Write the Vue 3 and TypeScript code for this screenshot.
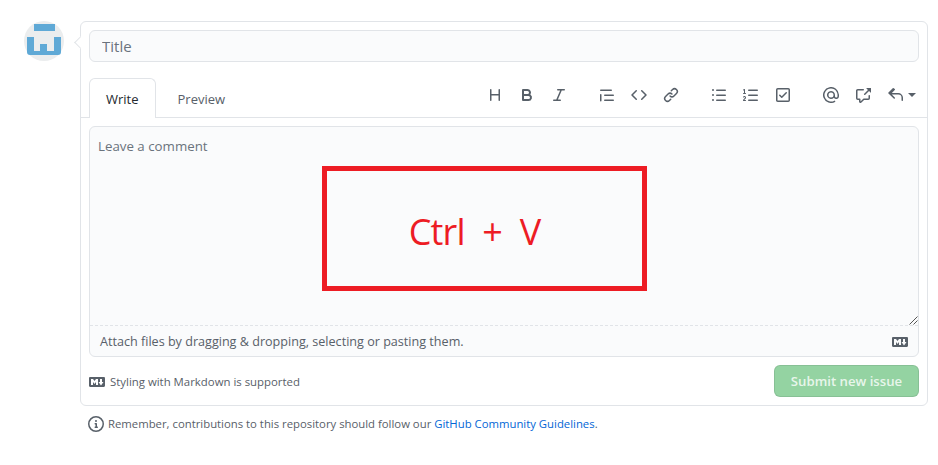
<template>
  <div class="page">
    <div class="thread">
      <svg class="avatar" viewBox="0 0 40 40" aria-hidden="true">
        <circle cx="20" cy="20" r="20" fill="#ebedee" />
        <rect x="10" y="3" width="21" height="7" fill="#5fa9d6" />
        <path d="M3 16h7v14h6v-7h7v7h7V16h7v15a3 3 0 01-3 3H6a3 3 0 01-3-3z" fill="#5fa9d6" />
      </svg>
      <div class="card">
        <input class="title" placeholder="Title" />
        <div class="tabbar">
          <div class="tabs">
            <span class="tab active">Write</span>
            <span class="tab">Preview</span>
          </div>
          <div class="toolbar">
            <div v-for="(group, i) in toolbar" :key="i" class="group">
              <svg v-for="d in group" :key="d" class="icon" viewBox="0 0 16 16"><path :d="d" /></svg>
            </div>
            <div class="reply">
              <svg class="icon" viewBox="0 0 16 16"><path :d="replyIcon" /></svg>
              <span class="caret"></span>
            </div>
          </div>
        </div>
        <div class="body">
          <div class="field">
            <div class="area">
              <span class="placeholder">Leave a comment</span>
              <div class="paste-box">Ctrl + V</div>
              <svg class="grip" viewBox="0 0 10 10"><path d="M9.5 1.5l-8 8M9.5 5.5l-4 4" /></svg>
            </div>
            <div class="attach">
              <span>Attach files by dragging &amp; dropping, selecting or pasting them.</span>
              <svg class="md" viewBox="0 0 16 16"><path :d="markdownIcon" /></svg>
            </div>
          </div>
          <div class="actions">
            <span class="hint">
              <svg class="md" viewBox="0 0 16 16"><path :d="markdownIcon" /></svg>
              Styling with Markdown is supported
            </span>
            <button class="submit" disabled>Submit new issue</button>
          </div>
        </div>
      </div>
    </div>
    <p class="note">
      <svg class="icon" viewBox="0 0 16 16"><path :d="infoIcon" /></svg>
      <span>Remember, contributions to this repository should follow our <a>GitHub Community Guidelines</a>.</span>
    </p>
  </div>
</template>

<script setup lang="ts">
const markdownIcon =
  'M14.85 3H1.15C.52 3 0 3.52 0 4.15v7.69C0 12.48.52 13 1.15 13h13.69c.64 0 1.15-.52 1.15-1.15v-7.7C16 3.52 15.48 3 14.85 3zM9 11H7V8L5.5 9.92 4 8v3H2V5h2l1.5 2L7 5h2v6zm2.99.5L9.5 8H11V5h2v3h1.5l-2.51 3.5z'
const infoIcon =
  'M8 1.5a6.5 6.5 0 100 13 6.5 6.5 0 000-13zM0 8a8 8 0 1116 0A8 8 0 010 8zm6.5-.25A.75.75 0 017.25 7h1a.75.75 0 01.75.75v2.75h.25a.75.75 0 010 1.5h-2a.75.75 0 010-1.5h.25v-2h-.25a.75.75 0 01-.75-.75zM8 6a1 1 0 100-2 1 1 0 000 2z'
const replyIcon =
  'M6.78 1.97a.75.75 0 010 1.06L3.81 6h6.44A4.75 4.75 0 0115 10.75v2.5a.75.75 0 01-1.5 0v-2.5a3.25 3.25 0 00-3.25-3.25H3.81l2.97 2.97a.75.75 0 11-1.06 1.06L.47 6.53a.75.75 0 010-1.06l4.25-4.25a.75.75 0 011.06 0z'

const toolbar: string[][] = [
  [
    'M3.75 2a.75.75 0 01.75.75V7h7V2.75a.75.75 0 011.5 0v10.5a.75.75 0 01-1.5 0V8.5h-7v4.75a.75.75 0 01-1.5 0V2.75A.75.75 0 013.75 2z',
    'M4 2a1 1 0 00-1 1v10a1 1 0 001 1h5.5a3.5 3.5 0 001.852-6.47A3.5 3.5 0 008.5 2H4zm4.5 5a1.5 1.5 0 100-3H5v3h3.5zM5 9v3h4.5a1.5 1.5 0 000-3H5z',
    'M6 2.75A.75.75 0 016.75 2h6.5a.75.75 0 010 1.5h-2.505l-3.858 9H9.25a.75.75 0 010 1.5h-6.5a.75.75 0 010-1.5h2.505l3.858-9H6.75A.75.75 0 016 2.75z',
  ],
  [
    'M1.75 2.5a.75.75 0 000 1.5h10.5a.75.75 0 000-1.5H1.75zm4 5a.75.75 0 000 1.5h8.5a.75.75 0 000-1.5h-8.5zm0 5a.75.75 0 000 1.5h8.5a.75.75 0 000-1.5h-8.5zM2.5 7.75a.75.75 0 00-1.5 0v6a.75.75 0 001.5 0v-6z',
    'M4.72 3.22a.75.75 0 011.06 1.06L2.06 8l3.72 3.72a.75.75 0 11-1.06 1.06L.47 8.53a.75.75 0 010-1.06l4.25-4.25zm6.56 0a.75.75 0 10-1.06 1.06L13.94 8l-3.72 3.72a.75.75 0 101.06 1.06l4.25-4.25a.75.75 0 000-1.06l-4.25-4.25z',
    'M7.775 3.275a.75.75 0 001.06 1.06l1.25-1.25a2 2 0 112.83 2.83l-2.5 2.5a2 2 0 01-2.83 0 .75.75 0 00-1.06 1.06 3.5 3.5 0 004.95 0l2.5-2.5a3.5 3.5 0 00-4.95-4.95l-1.25 1.25zm-4.69 9.64a2 2 0 010-2.83l2.5-2.5a2 2 0 012.83 0 .75.75 0 001.06-1.06 3.5 3.5 0 00-4.95 0l-2.5 2.5a3.5 3.5 0 004.95 4.95l1.25-1.25a.75.75 0 00-1.06-1.06l-1.25 1.25a2 2 0 01-2.83 0z',
  ],
  [
    'M2 4a1 1 0 100-2 1 1 0 000 2zm3.75-1.5a.75.75 0 000 1.5h8.5a.75.75 0 000-1.5h-8.5zm0 5a.75.75 0 000 1.5h8.5a.75.75 0 000-1.5h-8.5zm0 5a.75.75 0 000 1.5h8.5a.75.75 0 000-1.5h-8.5zM3 8a1 1 0 11-2 0 1 1 0 012 0zm-1 6a1 1 0 100-2 1 1 0 000 2z',
    'M2.003 2.5a.5.5 0 00-.723-.447l-1.003.5a.5.5 0 00.446.895l.28-.14V6H.5a.5.5 0 000 1h2.006a.5.5 0 100-1h-.503V2.5zM5 3.25a.75.75 0 01.75-.75h8.5a.75.75 0 010 1.5h-8.5A.75.75 0 015 3.25zm0 5a.75.75 0 01.75-.75h8.5a.75.75 0 010 1.5h-8.5A.75.75 0 015 8.25zm0 5a.75.75 0 01.75-.75h8.5a.75.75 0 010 1.5h-8.5a.75.75 0 01-.75-.75zM.924 10.32l.003-.004a.851.851 0 01.144-.153A.66.66 0 011.5 10c.195 0 .306.068.374.146a.57.57 0 01.128.376c0 .453-.269.682-.8 1.078l-.035.025C.692 11.98 0 12.495 0 13.5a.5.5 0 00.5.5h2.003a.5.5 0 000-1H1.146c.132-.197.351-.372.654-.597l.047-.035c.47-.35 1.156-.858 1.156-1.845 0-.365-.118-.744-.377-1.038-.268-.303-.658-.484-1.126-.484-.48 0-.84.202-1.068.392a1.858 1.858 0 00-.348.384l-.007.011-.002.004-.001.002-.001.001a.5.5 0 00.851.525z',
    'M2.5 2.75a.25.25 0 01.25-.25h10.5a.25.25 0 01.25.25v10.5a.25.25 0 01-.25.25H2.75a.25.25 0 01-.25-.25V2.75zM2.75 1A1.75 1.75 0 001 2.75v10.5c0 .966.784 1.75 1.75 1.75h10.5A1.75 1.75 0 0015 13.25V2.75A1.75 1.75 0 0013.25 1H2.75zm9.03 5.28a.75.75 0 00-1.06-1.06L6.75 9.19 5.28 7.72a.75.75 0 00-1.06 1.06l2 2a.75.75 0 001.06 0l4.5-4.5z',
  ],
  [
    'M4.75 2.37a6.5 6.5 0 006.5 11.26.75.75 0 01.75 1.298 8 8 0 113.994-7.273.754.754 0 01.006.095v1.5a2.75 2.75 0 01-5.072 1.475A4 4 0 1112 8v1.25a1.25 1.25 0 002.5 0V7.867a6.5 6.5 0 00-9.75-5.496V2.37zM10.5 8a2.5 2.5 0 10-5 0 2.5 2.5 0 005 0z',
    'M16 1.25v4.146a.25.25 0 01-.427.177L14.03 4.03l-3.75 3.75a.75.75 0 11-1.06-1.06l3.75-3.75-1.543-1.543A.25.25 0 0111.604 1h4.146a.25.25 0 01.25.25zM2.75 3.5a.25.25 0 00-.25.25v7.5c0 .138.112.25.25.25h2a.75.75 0 01.75.75v2.19l2.72-2.72a.75.75 0 01.53-.22h4.5a.25.25 0 00.25-.25v-2.5a.75.75 0 111.5 0v2.5A1.75 1.75 0 0113.25 13H9.06l-2.573 2.573A1.457 1.457 0 014 14.543V13H2.75A1.75 1.75 0 011 11.25v-7.5C1 2.784 1.784 2 2.75 2h5.5a.75.75 0 010 1.5h-5.5z',
  ],
]
</script>

<style>
html,
body {
  background: #fff;
}
</style>

<style scoped>
.page {
  width: 938px;
  height: 465px;
  box-sizing: border-box;
  padding: 21px 10px 0 24px;
  font-family: "Open Sans", "Noto Sans", sans-serif;
  font-size: 12.6px;
  color: #24292e;
  overflow: hidden;
}

.thread {
  display: flex;
  gap: 16px;
}

.avatar {
  width: 40px;
  height: 40px;
  flex: none;
}

.card {
  position: relative;
  flex: 1;
  border: 1px solid #e1e4e8;
  border-radius: 6px;
  background: #fff;
}

.card::before {
  content: "";
  position: absolute;
  left: -5px;
  top: 16px;
  width: 8px;
  height: 8px;
  background: #fff;
  border-left: 1px solid #e1e4e8;
  border-bottom: 1px solid #e1e4e8;
  transform: rotate(45deg);
}

.title {
  display: block;
  box-sizing: border-box;
  width: 830px;
  height: 32px;
  margin: 8px 8px 16px;
  padding: 0 12px;
  border: 1px solid #e1e4e8;
  border-radius: 6px;
  background: #fafbfc;
  font: inherit;
  font-size: 15px;
  outline: none;
}

.title::placeholder,
.placeholder {
  color: #6a737d;
}

.tabbar {
  display: flex;
  align-items: flex-end;
  justify-content: space-between;
  box-sizing: border-box;
  height: 40px;
  padding: 0 4px 0 8px;
  border-bottom: 1px solid #e1e4e8;
}

.tabs {
  display: flex;
}

.tab {
  box-sizing: border-box;
  height: 40px;
  margin-bottom: -1px;
  padding: 0 16px;
  border: 1px solid transparent;
  border-bottom: 0;
  border-radius: 6px 6px 0 0;
  font-size: 13px;
  line-height: 41px;
  color: #586069;
}

.tab.active {
  margin-right: 5px;
  border-color: #e1e4e8;
  background: #fff;
  color: #24292e;
}

.toolbar {
  display: flex;
  align-self: flex-start;
  margin: 9px 7px 0 0;
  gap: 16px;
}

.group {
  display: flex;
  gap: 16px;
}

.group + .group {
  margin-left: 16px;
}

.icon {
  display: block;
  width: 16px;
  height: 16px;
  flex: none;
  fill: #586069;
  fill-rule: evenodd;
}

.reply {
  display: flex;
  align-items: center;
  gap: 4px;
  margin-left: 1px;
}

.caret {
  width: 0;
  height: 0;
  border: 4px solid transparent;
  border-top-color: #586069;
  border-bottom: 0;
}

.body {
  padding: 8px;
}

.field {
  border: 1px solid #e1e4e8;
  border-radius: 6px;
  background: #fafbfc;
}

.area {
  position: relative;
  display: flex;
  flex-direction: column;
  height: 199px;
  box-sizing: border-box;
  border-bottom: 1px dashed #e1e4e8;
}

.placeholder {
  margin: 9px 0 0 8px;
  font-size: 13.3px;
  line-height: 20px;
}

.paste-box {
  box-sizing: border-box;
  width: 325px;
  height: 125px;
  margin: 10px 0 0 232px;
  padding-right: 20px;
  border: 5px solid #ed1c24;
  color: #ed1c24;
  font-size: 36px;
  letter-spacing: -0.8px;
  word-spacing: 9px;
  line-height: 121px;
  text-align: center;
}

.grip {
  position: absolute;
  right: 0;
  bottom: 0;
  width: 10px;
  height: 10px;
  fill: none;
  stroke: #555;
  stroke-width: 1;
}

.attach {
  display: flex;
  align-items: center;
  justify-content: space-between;
  box-sizing: border-box;
  height: 30px;
  padding: 1px 10px 0;
  color: #586069;
}

.md {
  display: block;
  width: 16px;
  height: 16px;
  flex: none;
  fill: #586069;
}

.actions {
  display: flex;
  align-items: center;
  justify-content: space-between;
  margin-top: 8px;
}

.hint {
  display: flex;
  align-items: center;
  gap: 5px;
  padding-top: 1px;
  font-size: 11.4px;
  color: #586069;
}

.submit {
  box-sizing: border-box;
  width: 145px;
  height: 32px;
  border: 1px solid rgba(27, 31, 35, 0.1);
  border-radius: 6px;
  background: #94d3a2;
  color: rgba(255, 255, 255, 0.8);
  font: inherit;
  font-size: 13.2px;
  font-weight: 600;
}

.note {
  display: flex;
  align-items: center;
  gap: 4px;
  margin: 9px 0 0 64px;
  font-size: 11.33px;
  line-height: 18px;
  color: #586069;
}

.note a {
  color: #0366d6;
}
</style>
